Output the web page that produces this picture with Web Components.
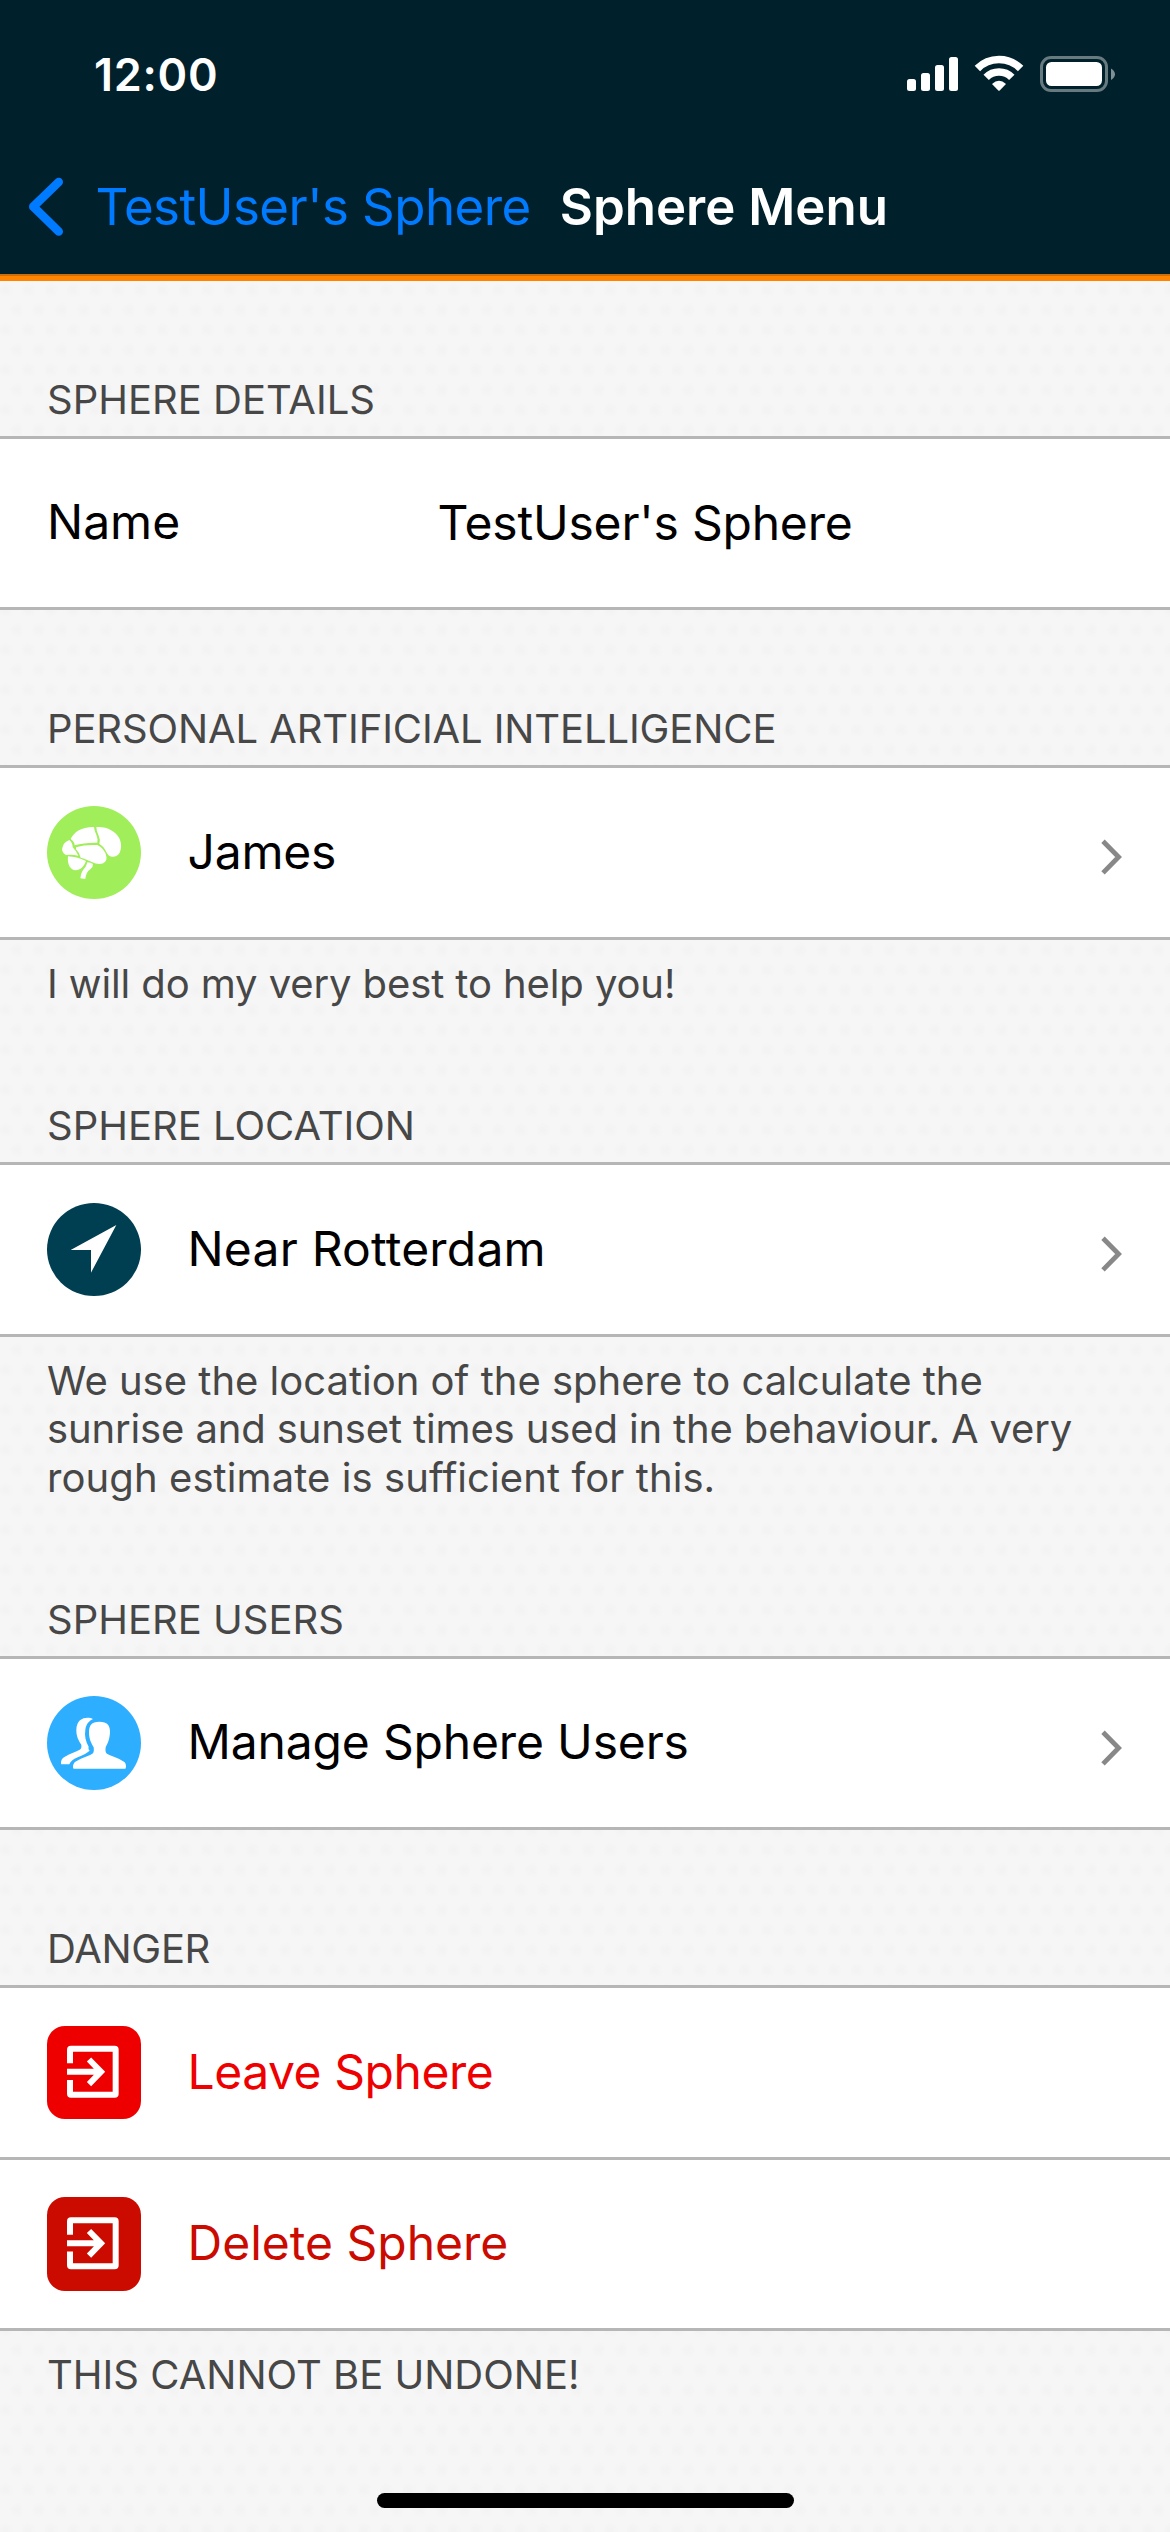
<!DOCTYPE html>
<html lang="en">
<head>
<meta charset="utf-8">
<title>Sphere Menu</title>
<style>
  html, body { margin: 0; height: 100%; }
  body { font-family: Inter, "Liberation Sans", sans-serif; color: #000; }
</style>
</head>
<body>
<sphere-screen>
  <status-bar slot="top" time="12:00"></status-bar>
  <nav-header slot="top">
    <span slot="back">TestUser's Sphere</span>
    <span slot="title">Sphere Menu</span>
  </nav-header>

  <menu-section>
    <span slot="header">SPHERE DETAILS</span>
    <menu-row label="Name" value="TestUser's Sphere"></menu-row>
  </menu-section>

  <menu-section style="--track:-.11px">
    <span slot="header">PERSONAL ARTIFICIAL INTELLIGENCE</span>
    <menu-row label="James" icon="brain" chevron style="--row:169px; --tile:#a0ee5a; letter-spacing:-.2px"></menu-row>
    <footer-line slot="footer" style="letter-spacing:-.1px">I will do my very best to help you!</footer-line>
  </menu-section>

  <menu-section>
    <span slot="header">SPHERE LOCATION</span>
    <menu-row label="Near Rotterdam" icon="location" chevron style="--row:169px; --tile:#003e52; letter-spacing:.2px"></menu-row>
    <footer-line slot="footer">We use the location of the sphere to calculate the</footer-line>
    <footer-line slot="footer" style="letter-spacing:-.13px">sunrise and sunset times used in the behaviour. A very</footer-line>
    <footer-line slot="footer" style="letter-spacing:.09px">rough estimate is sufficient for this.</footer-line>
  </menu-section>

  <menu-section>
    <span slot="header">SPHERE USERS</span>
    <menu-row label="Manage Sphere Users" icon="users" chevron style="--tile:#2daeff; letter-spacing:-.16px"></menu-row>
  </menu-section>

  <menu-section style="--track:-.3px">
    <span slot="header">DANGER</span>
    <menu-row label="Leave Sphere" icon="exit" style="--row:169px; --tile:#ef0000; --radius:18px; --ink:#ef0000; letter-spacing:-.45px"></menu-row>
    <menu-row label="Delete Sphere" icon="exit" style="--tile:#cb0a00; --radius:18px; --ink:#cb0a00"></menu-row>
    <footer-line slot="footer">THIS CANNOT BE UNDONE!</footer-line>
  </menu-section>

  <home-indicator slot="bottom"></home-indicator>
</sphere-screen>

<script>
const define = (name, render) => customElements.define(name, class extends HTMLElement {
  connectedCallback() {
    if (this.shadowRoot) return;
    this.attachShadow({ mode: 'open' }).innerHTML = render(this);
  }
});

const ICONS = {
  brain: `<svg viewBox="51 48 282 279" fill="#fff">
    <path d="M122 147C132 125 157 110 192 111Q193 122 199 134Q204 145 202 158Q163 157 134 166Q134 156 122 147Z"/>
    <path d="M199 111C232 109 256 124 267 143C276 160 274 176 269 188C264 197 255 201 246 200C237 199 233 194 229 186Q222 170 208 162Q212 149 206 137Q199 125 199 111Z"/>
    <path d="M138 172Q165 163 202 165Q224 175 229 199C232 213 223 222 208 222C193 221 182 212 152 203Q150 190 138 178Z"/>
    <path d="M118 150Q128 158 128 172Q140 184 145 197Q124 192 108 195C98 190 95 180 97 174Q99 158 118 150Z"/>
    <path d="M114 199Q140 200 168 213C162 230 152 240 136 241C121 240 111 223 114 199Z"/>
    <path d="M172 217Q182 217 189 222Q190 230 181 238Q168 246 166 267L151 265Q153 247 161 238Q170 228 172 217Z"/></svg>`,
  location: `<svg viewBox="51 54 282 279" fill="#fff"><path d="M259 120L183 263V195H122Z"/></svg>`,
  users: `<svg viewBox="51 48 282 282" fill="#fff">
    <path d="M189 117C176 110 139 109 139 151C139 170 146 183 154 194C155 201 154 206 149 209C134 217 109 225 99 234C93 239 92 250 94 253H118C121 244 130 237 145 231C160 225 172 218 179 212C175 208 175 204 176 200C167 185 163 167 166 150C168 132 178 122 189 117Z"/>
    <path d="M208 125C232 125 241 137 240 157C239 179 233 190 227 202C226 212 226 218 231 221C250 231 274 237 284 247C289 253 289 264 286 266H131C128 264 128 254 134 247C145 237 170 231 187 221C192 218 192 212 191 202C184 190 177 178 177 157C177 137 184 125 208 125Z"/></svg>`,
  exit: `<svg viewBox="51 48 282 279" fill="none" stroke="#fff" stroke-width="18">
    <path stroke-linejoin="round" d="M120 160V119Q120 116.500 123 116.500H254Q257 116.500 257 119V251Q257 254 254 254H123Q120 254 120 251V210"/>
    <path d="M111 185.500H213M177 148.500L213 185.500L177 222.500"/></svg>`
};

define('sphere-screen', () => `
  <style>
    :host { display: flex; flex-direction: column; width: 1170px; height: 2532px; overflow: hidden;
      background:
        radial-gradient(circle at 5.600px 10px, #f3f3f3 2px, transparent 8px) 0 0 / 22.400px 40px,
        radial-gradient(circle at 16.800px 30px, #f3f3f3 2px, transparent 8px) 0 0 / 22.400px 40px,
        #f6f6f6; }
    header { background: #00212b; }
    .rule { height: 5px; border-top: 2px solid #cc6f08; background: #ff8400; }
    main { flex: 1; }
  </style>
  <header><slot name="top"></slot></header>
  <div class="rule"></div>
  <main><slot></slot></main>
  <slot name="bottom"></slot>`);

define('status-bar', el => `
  <style>
    :host { display: flex; justify-content: space-between; align-items: center; height: 149px;
      padding: 0 54px 0 94px; color: #fff; font-size: 45px; font-weight: 600; letter-spacing: .7px; }
    span { line-height: 149px; }
    svg { display: block; }
  </style>
  <span>${el.getAttribute('time')}</span>
  <svg width="210" height="49" viewBox="906 50 210 49" fill="#fff">
    <rect x="907" y="79" width="9" height="12" rx="2.500"/>
    <rect x="921" y="73" width="9" height="18" rx="2.500"/>
    <rect x="935" y="65" width="9" height="26" rx="2.500"/>
    <rect x="949" y="57" width="9" height="34" rx="2.500"/>
    <g fill="none" stroke="#fff" stroke-width="7.600">
      <path d="M977.400 68.500A30.500 30.500 0 0 1 1020.600 68.500"/>
      <path d="M986.200 77.300A18 18 0 0 1 1011.800 77.300"/>
    </g>
    <path d="M992 84Q999 77.400 1006 84L999.700 90.500Q999 91.200 998.300 90.500Z"/>
    <rect x="1041.500" y="57.500" width="65" height="33" rx="9.500" fill="none" stroke="#667a80" stroke-width="3"/>
    <rect x="1046" y="62" width="56" height="24" rx="5.500"/>
    <path d="M1111 68.500Q1115 71 1115 74.300T1111 80Z" fill="#7f9095"/>
  </svg>`);

define('nav-header', () => `
  <style>
    :host { display: flex; align-items: center; height: 115px; padding: 0 28px 10px 27px; font-size: 51px; line-height: 115px; white-space: nowrap; }
    svg { display: block; margin-right: 30.500px; }
    .back { color: #007aff; letter-spacing: -.55px; margin-right: 29px; }
    .title { color: #fff; font-weight: 600; }
  </style>
  <svg width="38" height="64" viewBox="27 174 38 64" fill="none" stroke="#007aff" stroke-width="8.600" stroke-linecap="round" stroke-linejoin="round"><path d="M58.700 181L33.300 205.700L58.700 230.500"/></svg>
  <span class="back"><slot name="back"></slot></span>
  <span class="title"><slot name="title"></slot></span>`);

define('menu-section', () => `
  <style>
    :host { display: block; }
    h2 { display: flex; align-items: flex-end; height: 143px; margin: 0; padding: 0 47px 12px;
      font-size: 40px; line-height: 48.500px; font-weight: 400; letter-spacing: var(--track, 0); color: #474747; }
    .rows { display: flex; flex-direction: column; gap: 3px; background: #b6b6b6; border-top: 3px solid #b6b6b6; border-bottom: 3px solid #b6b6b6; }
    .notes { display: flex; flex-direction: column; }
    .notes ::slotted(:nth-of-type(1)) { padding-top: 19.500px; }
    .notes ::slotted(:last-of-type) { margin-bottom: -1px; }
  </style>
  <h2><slot name="header"></slot></h2>
  <div class="rows"><slot></slot></div>
  <div class="notes"><slot name="footer"></slot></div>`);

define('footer-line', () => `
  <style>
    :host { display: block; padding: 0 47px; font-size: 40px; line-height: 48.500px; color: #474747; white-space: nowrap; }
  </style>
  <slot></slot>`);

define('menu-row', el => {
  const icon = el.getAttribute('icon');
  const value = el.getAttribute('value');
  return `
  <style>
    :host { display: flex; align-items: center; box-sizing: border-box; height: var(--row, 168px); padding: 0 47px;
      background: #fff; font-size: 48px; line-height: 58px; white-space: nowrap; }
    .tile { width: 94px; height: calc(262px - var(--row, 168px)); margin-right: 46.500px; background: var(--tile); border-radius: var(--radius, 50%); overflow: hidden; }
    .tile svg { display: block; width: 100%; height: 100%; }
    .label { color: var(--ink, #000); padding-bottom: 2px; }
    .pair { width: 390.500px; }
    .value { letter-spacing: -.2px; }
    .chevron { display: block; margin: 9px 0 0 auto; }
  </style>
  ${icon ? `<div class="tile">${ICONS[icon]}</div>` : ''}
  <span class="label${value ? ' pair' : ''}">${el.getAttribute('label')}</span>
  ${value ? `<span class="value">${value}</span>` : ''}
  ${el.hasAttribute('chevron') ? `<svg class="chevron" width="24" height="38" viewBox="1099 838 24 38" fill="none" stroke="#888" stroke-width="4.800"><path d="M1103 841.300L1118.600 857L1103 872.900"/></svg>` : ''}`;
});

define('home-indicator', () => `
  <style>
    :host { display: block; width: 417px; height: 15px; margin: 0 auto 24px; border-radius: 7.500px; background: #000; }
  </style>`);
</script>
</body>
</html>
